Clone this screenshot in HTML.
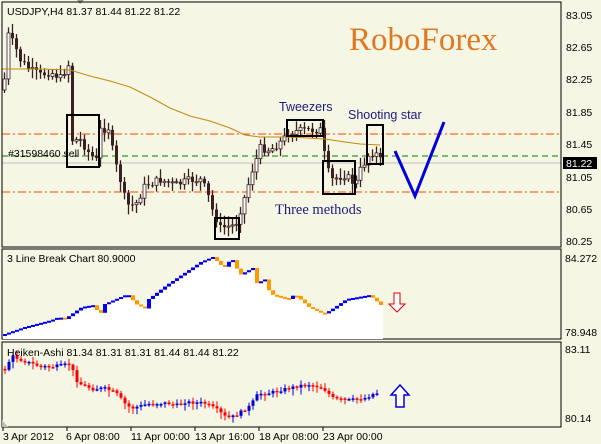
<!DOCTYPE html>
<html><head><meta charset="utf-8"><style>
body{margin:0;background:#f6f6e4;}
svg{display:block}
text{font-family:"Liberation Sans",sans-serif;font-size:10.5px;fill:#000}
</style></head><body>
<svg id="s" width="601" height="444" xmlns="http://www.w3.org/2000/svg">
<rect width="601" height="444" fill="#f6f6e4"/>
<line x1="2" y1="134" x2="561" y2="134" stroke="#ff4500" stroke-dasharray="8,3,2,3"/>
<line x1="2" y1="192" x2="561" y2="192" stroke="#ff4500" stroke-dasharray="8,3,2,3"/>
<line x1="2" y1="156" x2="561" y2="156" stroke="#008000" stroke-dasharray="6,4"/>
<line x1="2" y1="163" x2="561" y2="163" stroke="#c0c0c0"/>
<g id="cand"></g>
<polyline fill="none" stroke="#c08a10" stroke-width="1" points="2,69 40,69 70,70 90,76 110,81 130,87 150,97 170,108 190,116 210,121 230,128 245,135 260,137 290,137 325,139 345,142 360,144 380,145"/>
<text x="7" y="15">USDJPY,H4  81.37 81.44 81.22 81.22</text>
<text x="8" y="157">#31598460 sell</text>
<text x="349" y="50" style="font-family:'Liberation Serif',serif;font-size:33px;fill:#e07820">RoboForex</text>
<text x="279" y="111" style="font-size:12.5px;fill:#1a1a80">Tweezers</text>
<text x="348" y="119" style="font-size:12.5px;fill:#1a1a80">Shooting star</text>
<text x="275" y="214" style="font-family:'Liberation Serif',serif;font-size:14.5px;fill:#1a1a80">Three methods</text>
<g fill="none" stroke="#000" stroke-width="2">
<rect x="67" y="115" width="32" height="52"/>
<rect x="215" y="218" width="24" height="21"/>
<rect x="287" y="120" width="36" height="16"/>
<rect x="323" y="161" width="32" height="33"/>
<rect x="367" y="125" width="16" height="39"/>
</g>
<polyline points="395,151 415,196 444,122" fill="none" stroke="#0000dd" stroke-width="3"/>
<path d="M77,0 L84,0 L80,4Z" fill="#999"/>
<rect x="2" y="2" width="559" height="245" fill="none" stroke="#000"/>
<g>
<text x="566" y="19">83.05</text><text x="566" y="51">82.65</text><text x="566" y="83">82.25</text><text x="566" y="116">81.85</text><text x="566" y="148">81.45</text><text x="566" y="181">81.05</text><text x="566" y="213">80.65</text><text x="566" y="245">80.25</text>
</g>
<rect x="563" y="157" width="34" height="12" fill="#000"/>
<text x="566" y="167" style="fill:#fff">81.22</text>
<rect x="2" y="249" width="559" height="90" fill="none" stroke="#000"/>
<path id="lbarea" fill="#fff"/>
<g id="lb"></g>
<text x="7" y="262">3 Line Break Chart 80.9000</text>
<text x="565" y="262">84.272</text><text x="565" y="336">78.948</text>
<path d="M394,293 h6 v11 h5 l-8,8 l-8,-8 h5z" fill="#fff" stroke="#e00000"/>
<rect x="2" y="342" width="559" height="85" fill="none" stroke="#000"/>
<g id="ha"></g>
<text x="7" y="356">Heiken-Ashi 81.34 81.31 81.31 81.44 81.44 81.22</text>
<text x="565" y="353">83.11</text><text x="565" y="422">80.14</text>
<path d="M396,407 v-12 h-5 l9,-10 l9,10 h-5 v12z" fill="#fff" stroke="#0000dd" stroke-width="1.5"/>
<path d="M2,427 L2,420 L8,427Z" fill="#bbb"/>
<g>
<text x="3" y="440">3 Apr 2012</text><text x="66" y="440">6 Apr 08:00</text><text x="131" y="440">11 Apr 00:00</text><text x="195" y="440">13 Apr 16:00</text><text x="259" y="440">18 Apr 08:00</text><text x="323" y="440">23 Apr 00:00</text>
</g>
<g stroke="#000"><line x1="3" y1="427" x2="3" y2="431"/><line x1="67" y1="427" x2="67" y2="431"/><line x1="131" y1="427" x2="131" y2="431"/><line x1="195" y1="427" x2="195" y2="431"/><line x1="259" y1="427" x2="259" y2="431"/><line x1="323" y1="427" x2="323" y2="431"/></g>
</svg>
<script>
var NS="http://www.w3.org/2000/svg";
function el(p,t,a){var e=document.createElementNS(NS,t);for(var k in a)e.setAttribute(k,a[k]);p.appendChild(e);return e;}
var seed=7;function rnd(){seed=(seed*9301+49297)%233280;return seed/233280;}
function interp(pts,x){for(var i=1;i<pts.length;i++){if(x<=pts[i][0]){var a=pts[i-1],b=pts[i];return a[1]+(b[1]-a[1])*(x-a[0])/(b[0]-a[0]);}}return pts[pts.length-1][1];}
var mp=[[3,90],[8,35],[14,45],[20,60],[30,70],[40,75],[50,72],[60,78],[68,65],[72,140],[80,140],[90,155],[96,160],[100,130],[108,128],[114,160],[120,180],[126,205],[135,205],[145,185],[160,180],[175,185],[190,180],[200,180],[206,190],[212,210],[220,228],[235,225],[245,195],[252,170],[260,148],[270,150],[280,142],[290,132],[305,130],[320,130],[325,160],[330,180],[345,175],[355,185],[360,170],[370,152],[378,155],[381,163]];
var g=document.getElementById('cand');var prev=interp(mp,3);
for(var x=4;x<=381;x+=4){var c=interp(mp,x)+(rnd()-0.5)*8;var o=prev;var hi=Math.min(o,c)-2-rnd()*8,lo=Math.max(o,c)+2+rnd()*8;
el(g,'line',{x1:x+0.5,y1:hi,x2:x+0.5,y2:lo,stroke:'#3a2020','stroke-width':1.3});
var t=Math.min(o,c),h=Math.max(1,Math.abs(o-c));
if(c<o)el(g,'rect',{x:x-1,y:t,width:3,height:h,fill:'#fff',stroke:'#3a2020','stroke-width':0.8});else el(g,'rect',{x:x-1,y:t,width:3,height:h,fill:'#3a2020'});
prev=c;}
var lp=[[3,334],[23,327],[50,320],[57,317],[63,319],[80,307],[92,305],[98,315],[103,304],[126,294],[134,304],[144,309],[147,299],[165,285],[199,262],[211,257],[222,268],[230,258],[238,275],[251,268],[253,284],[264,279],[268,294],[287,299],[293,294],[307,307],[322,314],[329,310],[345,299],[368,295],[379,305]];
var lb=document.getElementById('lb');var d='M3,339';var py=interp(lp,3);
for(var x=3;x<=379;x+=4){var y=interp(lp,x);d+=' L'+x+','+y+' L'+(x+4)+','+y;
var col=y<=py?'#0000ee':'#ff9900';var t=Math.min(y,py),h=Math.max(2,Math.abs(y-py));el(lb,'rect',{x:x,y:t,width:4,height:h,fill:col});py=y;}
d+=' L383,339Z';document.getElementById('lbarea').setAttribute('d',d);
var hp=[[4,369],[11,356],[23,361],[38,366],[50,367],[69,364],[77,383],[92,389],[103,388],[115,393],[126,406],[132,408],[146,404],[165,403],[176,405],[184,402],[203,403],[215,409],[226,418],[234,416],[249,406],[257,394],[268,393],[284,389],[306,384],[322,388],[333,399],[349,400],[364,398],[374,393],[379,393]];
var ha=document.getElementById('ha');py=interp(hp,4);
for(var x=4;x<=379;x+=4){var y=interp(hp,x)+(rnd()-0.5)*3;var col=y<=py?'#0000dd':'#ff0000';
var hi=Math.min(y,py)-1-rnd()*4,lo=Math.max(y,py)+1+rnd()*6;el(ha,'line',{x1:x+1,y1:hi,x2:x+1,y2:lo,stroke:col});
el(ha,'rect',{x:x-0.5,y:Math.min(y,py),width:3,height:Math.max(1.5,Math.abs(y-py)),fill:col});py=y;}
</script>
</body></html>
